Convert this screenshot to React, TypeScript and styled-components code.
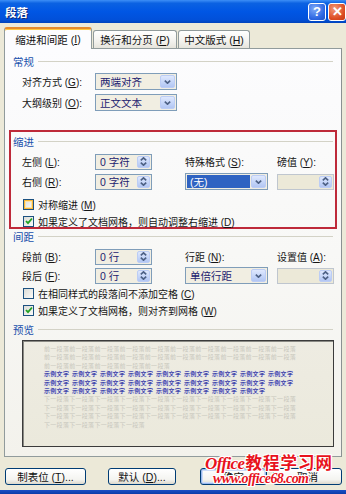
import React from "react";
import styled, { createGlobalStyle, css } from "styled-components";

const GlobalStyle = createGlobalStyle`
  html, body {
    margin: 0;
    padding: 0;
    background: #ece9d8;
  }
  body {
    font-family: "Liberation Sans", "Noto Sans CJK SC", sans-serif;
    font-size: 10px;
    color: #111;
  }
  * {
    box-sizing: border-box;
  }
`;

// 外枠
const Window = styled.div`
  position: relative;
  width: 346px;
  height: 494px;
  display: flex;
  flex-direction: column;
  background: #ece9d8;
  overflow: hidden;
`;

const TitleBar = styled.div`
  flex: none;
  height: 23px;
  display: flex;
  align-items: center;
  padding-left: 5px;
  background: linear-gradient(#3d8ff7 0%, #0b62e2 14%, #0056e4 50%, #0150d9 85%, #0043bb 100%);
`;

const Title = styled.div`
  flex: 1;
  color: #fff;
  font-weight: bold;
  font-size: 11.5px;
  text-shadow: 1px 1px 0 #0b2473;
`;

const CapButton = styled.div<{ $close?: boolean }>`
  width: 18px;
  height: 18px;
  margin-left: 2px;
  border: 1px solid #fff;
  border-radius: 3px;
  display: flex;
  align-items: center;
  justify-content: center;
  color: #fff;
  font-weight: bold;
  font-size: 13px;
  font-family: "Liberation Sans", sans-serif;
  background: ${(p) =>
    p.$close
      ? "radial-gradient(circle at 35% 30%, #f39a7a, #dc4c22 65%, #c23a15)"
      : "radial-gradient(circle at 35% 30%, #7eaaf8, #2d66e2 65%, #2253c6)"};
`;

const Body = styled.div`
  flex: 1;
  display: flex;
  flex-direction: column;
  padding: 4px 4px 0 4px;
`;

const TabStrip = styled.div`
  height: 21px;
  display: flex;
  align-items: flex-end;
`;

const Tab = styled.div<{ $active?: boolean; $w: number }>`
  position: relative;
  z-index: ${(p) => (p.$active ? 2 : 1)};
  width: ${(p) => p.$w}px;
  height: ${(p) => (p.$active ? 22 : 18)}px;
  margin-bottom: ${(p) => (p.$active ? -1 : 0)}px;
  margin-right: 1px;
  display: flex;
  align-items: center;
  justify-content: center;
  font-size: 10.5px;
  border: 1px solid #919b9c;
  border-bottom: none;
  border-radius: 3px 3px 0 0;
  ${(p) =>
    p.$active
      ? css`
          background: #fcfcfe;
          border-top: 2px solid #e68b2c;
          box-shadow: inset 0 1px 0 #ffc83c;
        `
      : css`
          background: linear-gradient(#ffffff, #f3f2ee 60%, #e6e4dc);
        `}
`;

const Panel = styled.div`
  height: 409px;
  display: flex;
  flex-direction: column;
  border: 1px solid #919b9c;
  border-right-color: #8a9192;
  background: linear-gradient(#fcfcfe 0%, #f8f8f6 50%, #f3f2ec 100%);
`;

const Group = styled.section<{ $boxed?: boolean; $mt: number }>`
  margin: ${(p) => p.$mt}px 4px 0 4px;
  padding: 0 4px;
  ${(p) =>
    p.$boxed &&
    css`
      border: 2px solid #be2a3a;
      padding: 2px 2px 0 2px;
    `}
`;

const GroupHeader = styled.div`
  height: 14px;
  display: flex;
  align-items: center;
  gap: 4px;
`;

const GroupTitle = styled.span`
  color: #2050ac;
  font-size: 10.5px;
`;

const GroupLine = styled.div`
  flex: 1;
  height: 1px;
  background: #d3d2c6;
`;

const Rows = styled.div<{ $mt: number; $gap: number }>`
  margin: ${(p) => p.$mt}px 0 0 9px;
  display: flex;
  flex-direction: column;
  gap: ${(p) => p.$gap}px;
`;

const Row = styled.div`
  height: 17px;
  display: grid;
  grid-template-columns: 73px 90px 92px 57px;
  align-items: center;
`;

const Label = styled.span`
  white-space: nowrap;
  color: #151515;
`;

const Combo = styled.div<{ $w: number; $selected?: boolean }>`
  width: ${(p) => p.$w}px;
  height: 17px;
  display: flex;
  align-items: stretch;
  border: 1px solid #7f9db9;
  background: #f1eee2;
  padding: 1px;
`;

const ComboText = styled.div<{ $selected?: boolean }>`
  flex: 1;
  display: flex;
  align-items: center;
  padding-left: 3px;
  font-size: 10.5px;
  color: ${(p) => (p.$selected ? "#fff" : "#1c2270")};
  background: ${(p) => (p.$selected ? "#2f63c2" : "transparent")};
  margin-right: ${(p) => (p.$selected ? 1 : 0)}px;
`;

const DropBtn = styled.div`
  width: 15px;
  display: flex;
  align-items: center;
  justify-content: center;
  border: 1px solid #bccdf5;
  border-radius: 2px;
  background: linear-gradient(#dfe8fd, #c3d4f8 60%, #b2c6f3);
`;

const Spin = styled.div<{ $disabled?: boolean }>`
  width: 57px;
  height: 16px;
  display: flex;
  align-items: stretch;
  border: 1px solid ${(p) => (p.$disabled ? "#bfc6cf" : "#7f9db9")};
  background: ${(p) => (p.$disabled ? "#ece9d8" : "#f1eee2")};
  padding: 1px;
`;

const SpinText = styled.div`
  flex: 1;
  display: flex;
  align-items: center;
  padding-left: 3px;
  color: #1c2270;
  font-size: 10.5px;
  white-space: nowrap;
`;

const SpinBtn = styled.div`
  width: 13px;
  display: flex;
  flex-direction: column;
  align-items: center;
  justify-content: center;
  gap: 1px;
  border: 1px solid #bccdf5;
  border-radius: 2px;
  background: linear-gradient(#dfe8fd, #c3d4f8 60%, #b2c6f3);
`;

const Checks = styled.div<{ $mt: number; $gap: number }>`
  margin: ${(p) => p.$mt}px 0 0 10px;
  display: flex;
  flex-direction: column;
  gap: ${(p) => p.$gap}px;
`;

const CheckRow = styled.div`
  height: 12px;
  display: flex;
  align-items: center;
  gap: 4px;
  white-space: nowrap;
`;

const Box = styled.div<{ $hover?: boolean }>`
  width: 11px;
  height: 11px;
  flex: none;
  display: flex;
  align-items: center;
  justify-content: center;
  border: 1px solid #1c5180;
  background: linear-gradient(135deg, #dcdcd7, #fbfbf9);
  ${(p) =>
    p.$hover &&
    css`
      box-shadow: inset 0 0 0 1px #f8b636, inset 0 0 0 2px #fde3a1;
    `}
`;

const PreviewBox = styled.div`
  margin: 4px 0 0 9px;
  width: 312px;
  height: 107px;
  padding: 4px 0 0 21px;
  border: 1px solid #3b3b3b;
  box-shadow: inset 1px 1px 0 #8a8a84;
  background: linear-gradient(#eeece2, #ebe9dc);
  font-family: "Noto Sans CJK SC", sans-serif;
  font-size: 6px;
  line-height: 8.4px;
  letter-spacing: 0.3px;
`;

const PLine = styled.div<{ $main?: boolean }>`
  height: 8.4px;
  white-space: nowrap;
  color: ${(p) => (p.$main ? "#15158e" : "#c8c7bd")};
  ${(p) =>
    p.$main &&
    css`
      text-shadow: 0 0 1px #8f9cff;
    `}
`;

const Word = styled.span`
  margin-right: 2.8px;
`;

const ButtonRow = styled.div`
  margin-top: 11px;
  height: 17px;
  display: flex;
`;

const PushButton = styled.div<{ $w: number; $ml: number; $default?: boolean }>`
  width: ${(p) => p.$w}px;
  margin-left: ${(p) => p.$ml}px;
  display: flex;
  align-items: center;
  justify-content: center;
  border: 1px solid #003c74;
  border-radius: 3px;
  background: linear-gradient(#ffffff, #f4f4f0 70%, #dcd8cc);
  font-size: 10.5px;
  white-space: nowrap;
  ${(p) =>
    p.$default &&
    css`
      box-shadow: inset 0 0 0 1px #9ab9ef, inset 0 0 0 2px #cddcf8;
    `}
`;

const BottomFrame = styled.div`
  margin-top: auto;
  height: 4px;
  flex: none;
  background: linear-gradient(#1a4fc6, #0a3ba8);
`;

const Watermark = styled.div`
  position: absolute;
  left: 205px;
  top: 453px;
  color: #e8121c;
  font-weight: bold;
  text-shadow: -1px -1px 0 #fff, 1px -1px 0 #fff, -1px 1px 0 #fff, 1px 1px 0 #fff,
    0 -1px 0 #fff, 0 1px 0 #fff, -1px 0 0 #fff, 1px 0 0 #fff;
  pointer-events: none;
`;

const WmTop = styled.div`
  display: flex;
  align-items: baseline;
  height: 19px;
  line-height: 19px;
`;

const WmLatin = styled.span<{ $size: number }>`
  font-family: "Liberation Serif", serif;
  font-style: italic;
  font-size: ${(p) => p.$size}px;
  letter-spacing: -0.6px;
`;

const WmCjk = styled.span`
  font-family: "Noto Sans CJK SC", sans-serif;
  font-size: 16.5px;
  letter-spacing: 1px;
  margin-left: 1px;
`;

const WmBottom = styled.div`
  margin-left: 8px;
  height: 14px;
  line-height: 14px;
`;

function Chevron({ up }: { up?: boolean }) {
  return (
    <svg width="7" height="4" viewBox="0 0 7 4">
      <polyline
        points={up ? "0.8,3.4 3.5,0.8 6.2,3.4" : "0.8,0.6 3.5,3.2 6.2,0.6"}
        fill="none"
        stroke="#4d6185"
        strokeWidth="1.6"
      />
    </svg>
  );
}

function Accel({ text, k, tail = "" }: { text: string; k: string; tail?: string }) {
  return (
    <>
      {text} (<u>{k}</u>){tail}
    </>
  );
}

function Dropdown({ w, value, selected }: { w: number; value: string; selected?: boolean }) {
  return (
    <Combo $w={w}>
      <ComboText $selected={selected}>{value}</ComboText>
      <DropBtn>
        <Chevron />
      </DropBtn>
    </Combo>
  );
}

function Spinner({ value, disabled }: { value?: string; disabled?: boolean }) {
  return (
    <Spin $disabled={disabled}>
      <SpinText>{value}</SpinText>
      <SpinBtn>
        <Chevron up />
        <Chevron />
      </SpinBtn>
    </Spin>
  );
}

function Check({ checked, hover, children }: { checked?: boolean; hover?: boolean; children: React.ReactNode }) {
  return (
    <CheckRow>
      <Box $hover={hover}>
        {checked && (
          <svg width="8" height="8" viewBox="0 0 8 8">
            <polyline points="1,4 3,6.2 7,1.5" fill="none" stroke="#21a121" strokeWidth="1.8" />
          </svg>
        )}
      </Box>
      <Label>{children}</Label>
    </CheckRow>
  );
}

function Header({ title }: { title: string }) {
  return (
    <GroupHeader>
      <GroupTitle>{title}</GroupTitle>
      <GroupLine />
    </GroupHeader>
  );
}

const repeat = (s: string, n: number) => Array.from({ length: n }, () => s).join("");

function Words({ n }: { n: number }) {
  return (
    <>
      {Array.from({ length: n }, (_, i) => (
        <Word key={i}>示例文字</Word>
      ))}
    </>
  );
}

export default function App() {
  return (
    <>
      <GlobalStyle />
      <Window>
        <TitleBar>
          <Title>段落</Title>
          <CapButton>?</CapButton>
          <CapButton $close>✕</CapButton>
        </TitleBar>
        <Body>
          <TabStrip>
            <Tab $active $w={88}>
              <Accel text="缩进和间距" k="I" />
            </Tab>
            <Tab $w={84}>
              <Accel text="换行和分页" k="P" />
            </Tab>
            <Tab $w={72}>
              <Accel text="中文版式" k="H" />
            </Tab>
          </TabStrip>
          <Panel>
            <Group $mt={5}>
              <Header title="常规" />
              <Rows $mt={5} $gap={4}>
                <Row>
                  <Label>
                    <Accel text="对齐方式" k="G" tail=":" />
                  </Label>
                  <Dropdown w={82} value="两端对齐" />
                </Row>
                <Row>
                  <Label>
                    <Accel text="大纲级别" k="O" tail=":" />
                  </Label>
                  <Dropdown w={82} value="正文文本" />
                </Row>
              </Rows>
            </Group>

            <Group $boxed $mt={19}>
              <Header title="缩进" />
              <Rows $mt={5} $gap={3}>
                <Row>
                  <Label>
                    <Accel text="左侧" k="L" tail=":" />
                  </Label>
                  <Spinner value="0 字符" />
                  <Label>
                    <Accel text="特殊格式" k="S" tail=":" />
                  </Label>
                  <Label>
                    <Accel text="磅值" k="Y" tail=":" />
                  </Label>
                </Row>
                <Row>
                  <Label>
                    <Accel text="右侧" k="R" tail=":" />
                  </Label>
                  <Spinner value="0 字符" />
                  <Dropdown w={83} value="(无)" selected />
                  <Spinner disabled />
                </Row>
              </Rows>
              <Checks $mt={8} $gap={5}>
                <Check hover>
                  <Accel text="对称缩进" k="M" />
                </Check>
                <Check checked>
                  <Accel text="如果定义了文档网格，则自动调整右缩进" k="D" />
                </Check>
              </Checks>
            </Group>

            <Group $mt={0}>
              <Header title="间距" />
              <Rows $mt={5} $gap={2}>
                <Row>
                  <Label>
                    <Accel text="段前" k="B" tail=":" />
                  </Label>
                  <Spinner value="0 行" />
                  <Label>
                    <Accel text="行距" k="N" tail=":" />
                  </Label>
                  <Label>
                    <Accel text="设置值" k="A" tail=":" />
                  </Label>
                </Row>
                <Row>
                  <Label>
                    <Accel text="段后" k="F" tail=":" />
                  </Label>
                  <Spinner value="0 行" />
                  <Dropdown w={83} value="单倍行距" />
                  <Spinner disabled />
                </Row>
              </Rows>
              <Checks $mt={3} $gap={5}>
                <Check>
                  <Accel text="在相同样式的段落间不添加空格" k="C" />
                </Check>
                <Check checked>
                  <Accel text="如果定义了文档网格，则对齐到网格" k="W" />
                </Check>
              </Checks>
            </Group>

            <Group $mt={6}>
              <Header title="预览" />
              <PreviewBox>
                <PLine>{repeat("前一段落", 10)}</PLine>
                <PLine>{repeat("前一段落", 10)}</PLine>
                <PLine>{repeat("前一段落", 5)}</PLine>
                <PLine $main>
                  <Words n={9} />
                </PLine>
                <PLine $main>
                  <Words n={9} />
                </PLine>
                <PLine $main>
                  <Words n={8} />
                </PLine>
                <PLine>{repeat("下一段落", 10)}</PLine>
                <PLine>{repeat("下一段落", 10)}</PLine>
                <PLine>{repeat("下一段落", 10)}</PLine>
                <PLine>{repeat("下一段落", 4)}</PLine>
              </PreviewBox>
            </Group>
          </Panel>

          <ButtonRow>
            <PushButton $w={81} $ml={1}>
              <Accel text="制表位" k="T" tail="..." />
            </PushButton>
            <PushButton $w={68} $ml={22}>
              <Accel text="默认" k="D" tail="..." />
            </PushButton>
            <PushButton $w={67} $ml={24} $default>
              确定
            </PushButton>
            <PushButton $w={69} $ml={6}>
              取消
            </PushButton>
          </ButtonRow>
        </Body>
        <BottomFrame />
        <Watermark>
          <WmTop>
            <WmLatin $size={17}>Office</WmLatin>
            <WmCjk>教程学习网</WmCjk>
          </WmTop>
          <WmBottom>
            <WmLatin $size={14}>www.office68.com</WmLatin>
          </WmBottom>
        </Watermark>
      </Window>
    </>
  );
}
